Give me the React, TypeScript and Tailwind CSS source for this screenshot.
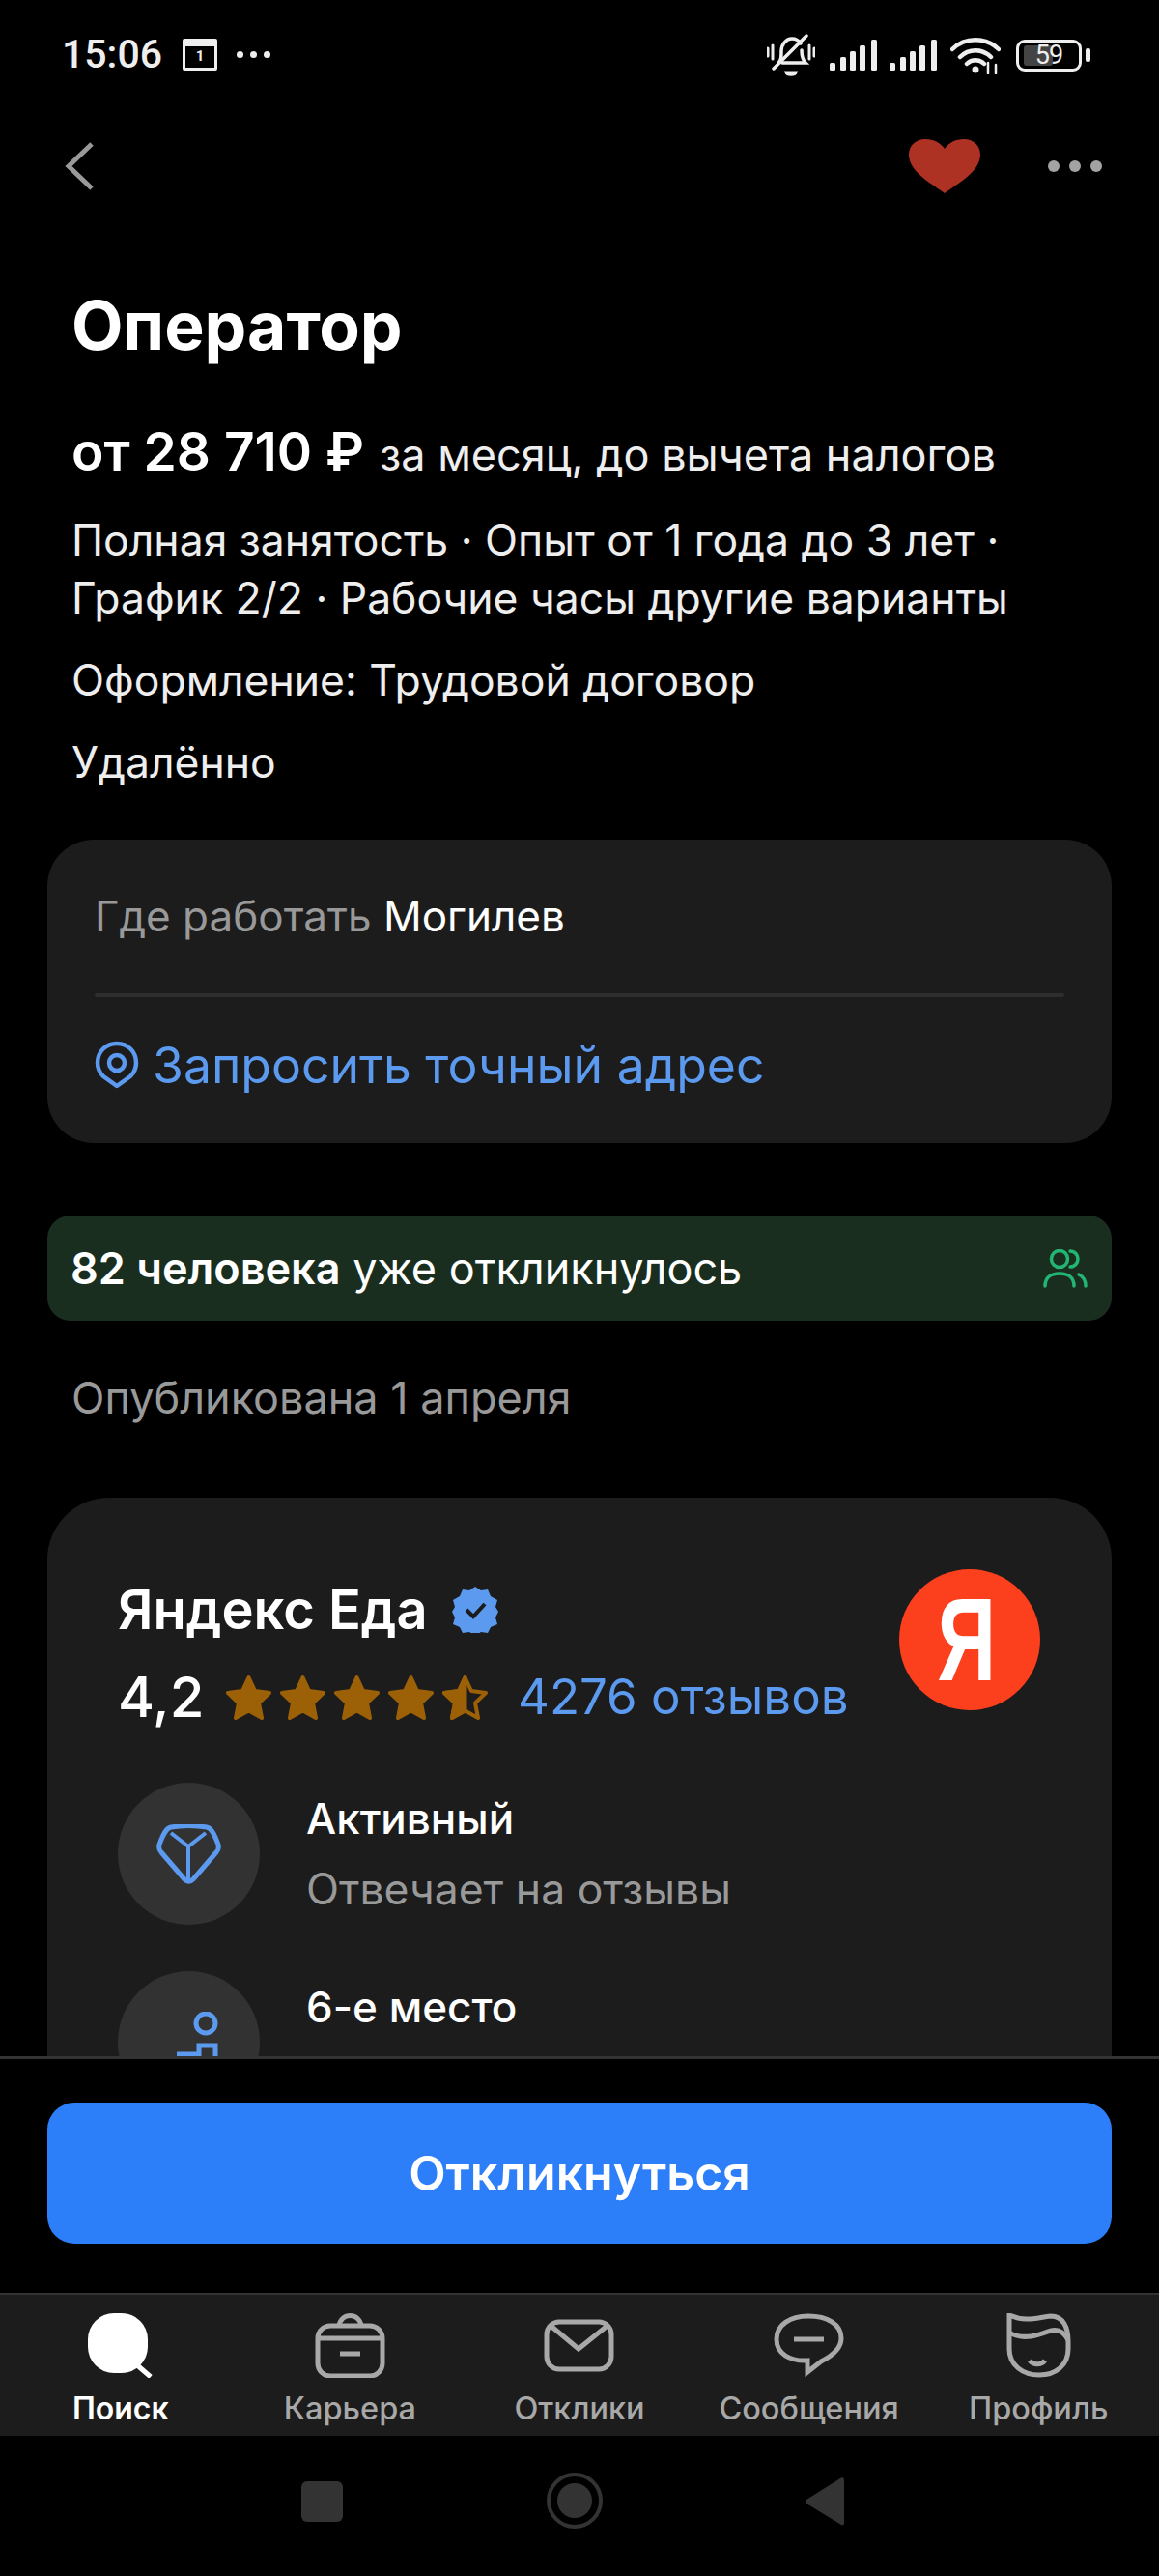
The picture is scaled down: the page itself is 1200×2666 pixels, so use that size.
function Signal() {
  return (
    <svg width="49" height="32" viewBox="0 0 49 32" fill="#eee">
      <rect x="0" y="24" width="6" height="8" rx="1.5" />
      <rect x="11" y="18" width="6" height="14" rx="1.5" />
      <rect x="21" y="12" width="6" height="20" rx="1.5" />
      <rect x="31" y="6" width="6" height="26" rx="1.5" />
      <rect x="43" y="0" width="6" height="32" rx="1.5" />
    </svg>
  );
}

function MutedBell() {
  return (
    <svg width="50" height="44" viewBox="0 0 50 44" fill="none" stroke="#eee" strokeWidth="3" strokeLinecap="round">
      <path d="M1 15v8M6 12v14M44 12v14M49 15v8" />
      <path d="M12 30c3-3 3-6 3-12 0-7 5-13 11-13 4 0 7 2 9 5M36 17c0 6 1 10 4 13H16" strokeWidth="3.5" />
      <path d="M7 36 41 2" strokeWidth="3.5" />
      <path d="M20 40h10c-1 3-9 3-10 0z" fill="#eee" />
    </svg>
  );
}

function Wifi() {
  return (
    <svg width="52" height="40" viewBox="0 0 52 40" fill="none" stroke="#eee" strokeWidth="4.5" strokeLinecap="round">
      <path d="M2 14C15 1 37 1 50 14" />
      <path d="M10 22c9-9 23-9 32 0" />
      <path d="M17 29c5-5 13-5 18 0" />
      <circle cx="26" cy="35" r="3.5" fill="#eee" stroke="none" />
      <path d="M39 28v11M47 30v9" strokeWidth="2.5" />
    </svg>
  );
}

function StatusBar() {
  return (
    <div className="h-[110px] flex items-start justify-between pl-[64px] pr-[71px] pt-[37px] text-[#eee]">
      <div className="flex items-center h-[38px]">
        <span className="w-[102px] text-[41px] leading-[38px] font-medium font-[Roboto,sans-serif]">15:06</span>
        <div className="ml-[23px] w-[36px] h-[33px] border-[3px] border-t-[8px] border-[#eee] rounded-[2px] flex items-center justify-center text-[15px] leading-none font-bold font-[Roboto,sans-serif]">
          1
        </div>
        <div className="ml-[20px] flex gap-[7px]">
          <span className="w-[7px] h-[7px] rounded-full bg-[#eee]" />
          <span className="w-[7px] h-[7px] rounded-full bg-[#eee]" />
          <span className="w-[7px] h-[7px] rounded-full bg-[#eee]" />
        </div>
      </div>
      <div className="flex items-center h-[40px]">
        <MutedBell />
        <div className="ml-[15px]"><Signal /></div>
        <div className="ml-[13px]"><Signal /></div>
        <div className="ml-[14px]"><Wifi /></div>
        <div className="ml-[16px] relative w-[68px] h-[33px] border-[3px] border-[#eee] rounded-[9px] flex items-center justify-center text-[27px] leading-none font-[Roboto,sans-serif] tracking-[-1px]">
          <span className="absolute left-[5px] top-[3px] bottom-[3px] w-[30px] bg-[#444] rounded-[3px]" />
          <span className="relative">59</span>
        </div>
        <span className="ml-[4px] w-[5px] h-[14px] rounded-[2px] bg-[#eee]" />
      </div>
    </div>
  );
}

function Header() {
  return (
    <div className="h-[124px] flex items-center justify-between pl-[67px] pr-[59px]">
      <svg width="32" height="50" viewBox="0 0 32 50" fill="none" stroke="#999" strokeWidth="5">
        <path d="M28 2 4 25l24 23" />
      </svg>
      <div className="flex items-center">
        <svg width="74" height="56" viewBox="0 0 74 56" fill="#ad3224">
          <path d="M37 56C24 46 0 34 0 16 0 6 8 0 17 0c9 0 16 4 20 10C41 4 48 0 57 0c9 0 17 6 17 16 0 18-24 30-37 40z" />
        </svg>
        <div className="ml-[70px] flex gap-[10px]">
          <span className="w-[12px] h-[12px] rounded-full bg-[#a3a3a3]" />
          <span className="w-[12px] h-[12px] rounded-full bg-[#a3a3a3]" />
          <span className="w-[12px] h-[12px] rounded-full bg-[#a3a3a3]" />
        </div>
      </div>
    </div>
  );
}

function Star({ half }: { half?: boolean }) {
  const d = "M24.5 3 31 17l15 2-11 10.500 3 15.500-13.500-7.500L11 45l3-15.500L3 19l15-2z";
  return (
    <svg width="49" height="47" viewBox="0 0 49 47" fill={half ? "none" : "#9c6006"} stroke="#9c6006" strokeWidth="4" strokeLinejoin="round">
      <path d={d} />
      {half && <path d="M24.500 3 18 17 3 19l11 10.500L11 45l13.500-7.500z" fill="#9c6006" />}
    </svg>
  );
}

function Stat({ title, sub, children }: { title: string; sub?: string; children: React.ReactNode }) {
  return (
    <div className="flex">
      <div className="w-[147px] h-[147px] shrink-0 rounded-full bg-[#323232] flex items-center justify-center">
        {children}
      </div>
      <div className="ml-[48px]">
        <p className="mt-[11px] text-[44px] leading-[52px] font-medium text-white">{title}</p>
        {sub && <p className="mt-[21px] text-[44.5px] leading-[52px] text-[#999]">{sub}</p>}
      </div>
    </div>
  );
}

function NavItem({ label, active, children }: { label: string; active?: boolean; children: React.ReactNode }) {
  return (
    <div className="flex flex-col items-center pt-[19px]">
      <div className="h-[67px] flex items-center justify-center">{children}</div>
      <span className={active ? "mt-[12px] text-[32px] leading-[40px] font-semibold text-white" : "mt-[12px] text-[32.5px] leading-[40px] font-medium text-[#a8a8a8]"}>
        {label}
      </span>
    </div>
  );
}

export default function App() {
  return (
    <div className="w-[1200px] h-[2666px] bg-black flex flex-col overflow-hidden font-[Inter,sans-serif]">
      <div className="h-[2128px] overflow-hidden">
        <StatusBar />
        <Header />
        <div className="px-[74px]">
          <h1 className="mt-[63px] text-[69.5px] leading-[80px] font-bold text-white">Оператор</h1>
          <p className="mt-[60px] h-[60px] leading-[60px] text-[45px] text-[#eee] whitespace-nowrap">
            <span className="text-[55px] font-semibold text-white">от 28 710 ₽</span>
            <span className="ml-[16px]">за месяц, до вычета налогов</span>
          </p>
          <p className="mt-[32px] text-[44.5px] leading-[60px] text-[#eee] whitespace-nowrap">
            Полная занятость · Опыт от 1 года до 3 лет ·<br />График 2/2 · Рабочие часы другие варианты
          </p>
          <p className="mt-[25px] text-[44.5px] leading-[60px] text-[#eee]">Оформление: Трудовой договор</p>
          <p className="mt-[25px] text-[44.5px] leading-[60px] text-[#eee]">Удалённо</p>
        </div>

        <div className="mx-[49px] mt-[50px] h-[314px] rounded-[48px] bg-[#1c1c1c] px-[49px]">
          <p className="h-[159px] pt-[49px] text-[44px] leading-[60px] text-[#999]">
            Где работать <span className="text-white">Могилев</span>
          </p>
          <div className="h-[4px] bg-[#2e2e2e] rounded-full" />
          <div className="mt-[40px] flex items-center h-[60px] text-[#5c9af0]">
            <svg width="46" height="50" viewBox="0 0 46 50" fill="none" stroke="#5c9af0" strokeWidth="4.500">
              <path d="M23 47 9 37C4 32 3 27 3 23 3 11 12 3 23 3s20 8 20 20c0 4-1 9-6 14z" strokeLinejoin="round" />
              <circle cx="23" cy="23" r="8" />
            </svg>
            <span className="ml-[14px] text-[51.7px] leading-[60px]">Запросить точный адрес</span>
          </div>
        </div>

        <div className="mx-[49px] mt-[75px] h-[109px] rounded-[24px] bg-[#1a2e20] pl-[24px] pr-[25px] flex items-center justify-between">
          <p className="text-[45px] leading-[60px] text-white">
            <span className="font-semibold">82 человека</span> уже откликнулось
          </p>
          <svg width="46" height="40" viewBox="0 0 46 40" fill="none" stroke="#22b573" strokeWidth="3.500" strokeLinecap="round">
            <circle cx="17" cy="10" r="8.500" />
            <path d="M2 38c0-9 6-13 15-13s15 4 15 13" />
            <path d="M28 2c5 0 8 4 8 8s-3 8-8 8M37 26c4 2 7 6 7 12" />
          </svg>
        </div>

        <p className="mx-[74px] mt-[50px] text-[45px] leading-[60px] text-[#999]">Опубликована 1 апреля</p>

        <div className="mx-[49px] mt-[73px] h-[700px] rounded-[64px] bg-[#1c1c1c] pl-[73px]">
          <div className="flex items-start justify-between pr-[74px]">
            <div>
              <div className="mt-[86px] flex items-center h-[60px]">
                <span className="text-[56px] leading-[60px] font-semibold text-white">Яндекс Еда</span>
                <svg className="ml-[25px]" width="48" height="48" viewBox="0 0 48 48">
                  <path d="M24 0l6 4 7-1 3 7 7 4-2 7 3 5-3 6 2 7-7 3-3 6-7-1-6 4-6-4-7 1-3-6-7-3 2-7-3-6 3-5-2-7 7-4 3-7 7 1z" fill="#5c9af0" />
                  <path d="M15 24l7 7 12-13" fill="none" stroke="#1c1c1c" strokeWidth="4" />
                </svg>
              </div>
              <div className="mt-[30px] flex items-center h-[60px]">
                <span className="w-[88px] text-[58px] leading-[60px] font-medium text-white">4,2</span>
                <div className="ml-[23px] flex gap-[7px]">
                  <Star /><Star /><Star /><Star /><Star half />
                </div>
                <span className="ml-[30px] text-[51px] leading-[60px] text-[#5c9af0] whitespace-nowrap">4276 отзывов</span>
              </div>
            </div>
            <div className="mt-[74px] w-[146px] h-[146px] rounded-full bg-[#fc3f1d] flex items-center justify-center pr-[6px]">
              <span className="text-[122px] leading-none font-bold font-['Liberation_Sans',sans-serif] text-white scale-x-[0.69]">Я</span>
            </div>
          </div>
          <div className="mt-[59px]">
            <Stat title="Активный" sub="Отвечает на отзывы">
              <svg width="67" height="62" viewBox="0 0 67 62" fill="none" stroke="#5c9af0" strokeWidth="5" strokeLinejoin="round">
                <path d="M15 3c12-2 25-2 37 0 5 1 8 7 12 18 1 4 0 6-2 8L38 57c-3 3-6 3-9 0L5 29c-2-2-3-4-2-8C7 10 10 4 15 3z" />
                <path d="M15 9l18 14 18-14M33 23v34" strokeWidth="4" />
              </svg>
            </Stat>
          </div>
          <div className="mt-[48px]">
            <Stat title="6-е место">
              <svg className="ml-[18px]" width="44" height="64" viewBox="0 0 44 64" fill="none" stroke="#5c9af0" strokeWidth="5">
                <circle cx="30" cy="12" r="10" />
                <path d="M0 44h23V35h17v29" />
              </svg>
            </Stat>
          </div>
        </div>
      </div>

      <div className="h-[245px] border-t-[3px] border-[#333] pt-[45px] px-[49px]">
        <div className="h-[146px] rounded-[28px] bg-[#2d7ff9] flex items-center justify-center text-[50px] font-semibold text-white">
          Откликнуться
        </div>
      </div>

      <div className="h-[148px] bg-[#1c1c1c] border-t-[2px] border-[#333] grid grid-cols-5 px-[6px]">
        <NavItem label="Поиск" active>
          <svg width="67" height="67" viewBox="0 0 67 67" className="-ml-[1px]">
            <rect x="0" y="0" width="62" height="62" rx="27" fill="#fff" />
            <path d="M50 53l15 13" stroke="#fff" strokeWidth="5" />
          </svg>
        </NavItem>
        <NavItem label="Карьера">
          <svg width="73" height="67" viewBox="0 0 73 67" fill="none" stroke="#a8a8a8" strokeWidth="5">
            <rect x="3" y="13" width="67" height="52" rx="13" />
            <path d="M3 26h67M25 13c2-14 21-14 23 0M26 42h21" />
          </svg>
        </NavItem>
        <NavItem label="Отклики">
          <svg width="73" height="55" viewBox="0 0 73 55" fill="none" stroke="#a8a8a8" strokeWidth="5">
            <rect x="3" y="3" width="67" height="49" rx="13" />
            <path d="M6 6l30 25 31-25" />
          </svg>
        </NavItem>
        <NavItem label="Сообщения">
          <svg width="73" height="67" viewBox="0 0 73 67" fill="none" stroke="#a8a8a8" strokeWidth="5">
            <path d="M36 3C17 3 3 12 3 27c0 15 14 23 32 22v12l14-11c12-6 21-13 21-24C70 11 55 3 36 3z" />
            <path d="M21 27h31" />
          </svg>
        </NavItem>
        <NavItem label="Профиль">
          <svg width="67" height="67" viewBox="0 0 67 67" fill="none" stroke="#a8a8a8" strokeWidth="5">
            <path d="M3 2c18 8 30 2 43 1 13 0 18 12 18 26v8c0 17-13 27-30 27S3 54 3 37V14c0-6 0-10 0-12z" />
            <path d="M3 20c16 10 37 0 43-2 8-2 14 2 18 10" />
            <path d="M24 49c4 5 12 5 16 0" />
          </svg>
        </NavItem>
      </div>

      <div className="flex-1 relative">
        <div className="absolute left-[312px] top-[47px] w-[43px] h-[42px] rounded-[6px] bg-[#333]" />
        <div className="absolute left-[566px] top-[38px] w-[58px] h-[58px] rounded-full border-[4px] border-[#333] flex items-center justify-center">
          <span className="w-[36px] h-[36px] rounded-full bg-[#333]" />
        </div>
        <svg className="absolute left-[834px] top-[43px]" width="40" height="50" viewBox="0 0 40 50" fill="#333">
          <path d="M38 0c1 0 2 1 2 3v44c0 2-1 3-3 2L1 27c-1-1-1-3 0-4L36 1z" />
        </svg>
      </div>
    </div>
  );
}
